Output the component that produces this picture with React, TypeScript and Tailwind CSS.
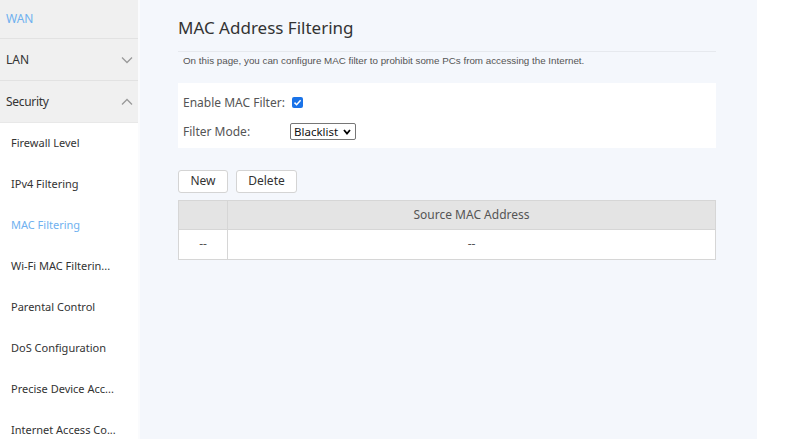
import React from "react";

const Chevron = ({ up }: { up?: boolean }) => (
  <svg width="12" height="8" viewBox="0 0 12 8" fill="none">
    <path
      d={up ? "M1 6.5 L6 1.5 L11 6.5" : "M1 1.5 L6 6.5 L11 1.5"}
      stroke="#9a9a9a"
      strokeWidth="1.3"
    />
  </svg>
);

const sub = [
  "Firewall Level",
  "IPv4 Filtering",
  "MAC Filtering",
  "Wi-Fi MAC Filterin...",
  "Parental Control",
  "DoS Configuration",
  "Precise Device Acc...",
  "Internet Access Co...",
];

export default function App() {
  return (
    <div
      className="flex w-[800px] h-[439px] overflow-hidden bg-white"
      style={{ fontFamily: "'Noto Sans', 'Open Sans', sans-serif" }}
    >
      <div className="w-[138px] shrink-0 flex flex-col bg-white">
        <div className="bg-[#f0f0f0]">
          <div className="h-[40px] -mt-[1px] flex items-center pl-[6px] text-[12px] text-[#6fb1ef] border-b border-[#e2e2e2]">
            WAN
          </div>
          <div className="h-[42px] flex items-center justify-between pl-[6px] pr-[5px] text-[12px] text-[#333] border-b border-[#e2e2e2]">
            <span>LAN</span>
            <Chevron />
          </div>
          <div className="h-[41px] flex items-center justify-between pl-[6px] pr-[5px] text-[12px] text-[#333]">
            <span className="tracking-[-0.3px]">Security</span>
            <Chevron up />
          </div>
        </div>
        <div className="flex flex-col border-t border-[#e8e8e8]">
          {sub.map((s) => (
            <div
              key={s}
              className={`h-[41px] flex items-center pl-[11px] text-[11px] ${
                s === "MAC Filtering" ? "text-[#6fb1ef]" : "text-[#333]"
              }`}
            >
              {s}
            </div>
          ))}
        </div>
      </div>
      <div className="w-[2px] bg-[#fafbfd]" />
      <div className="w-[617px] shrink-0 bg-[#f4f7fc] pl-[38px] pr-[41px]">
        <div className="h-[52px] flex items-end pb-[11px] text-[17px] text-[#333] border-b border-[#e6e9ee]">
          MAC Address Filtering
        </div>
        <div
          className="pt-[2px] pl-[5px] text-[9.8px] text-[#555]"
          style={{ fontFamily: "'Liberation Sans', Arial, sans-serif" }}
        >
          On this page, you can configure MAC filter to prohibit some PCs from accessing the Internet.
        </div>
        <div className="mt-[14px] h-[65px] bg-white pl-[5px] pt-[6px] text-[12px] text-[#555]">
          <div className="h-[28px] flex items-center">
            <span className="w-[109px]">Enable MAC Filter:</span>
            <span className="w-[11px] h-[11px] rounded-[2px] bg-[#1a73e8] flex items-center justify-center">
              <svg width="9" height="9" viewBox="0 0 9 9">
                <path d="M1.5 4.6 L3.6 6.7 L7.6 2.2" stroke="white" strokeWidth="1.5" fill="none" />
              </svg>
            </span>
          </div>
          <div className="h-[30px] flex items-center">
            <span className="w-[107px]">Filter Mode:</span>
            <span className="h-[17px] w-[66px] border border-[#767676] rounded-[2px] flex items-center justify-between pl-[3px] pr-[4px] text-[11.5px] text-[#111] bg-white">
              <span>Blacklist</span>
              <svg width="8" height="6" viewBox="0 0 8 6">
                <path d="M1 1 L4 4.5 L7 1" stroke="black" strokeWidth="1.8" fill="none" />
              </svg>
            </span>
          </div>
        </div>
        <div className="mt-[22px] flex gap-[8px]">
          <button className="h-[23px] w-[50px] bg-white border border-[#d4d4d4] rounded-[3px] text-[12px] text-[#333]">
            New
          </button>
          <button className="h-[23px] w-[61px] bg-white border border-[#d4d4d4] rounded-[3px] text-[12px] text-[#333]">
            Delete
          </button>
        </div>
        <div className="mt-[7px] border border-[#d6d6d6] text-[12px] text-[#555]">
          <div className="flex h-[29px] bg-[#e4e4e4] border-b border-[#d6d6d6]">
            <div className="w-[49px] border-r border-[#d6d6d6]" />
            <div className="flex-1 flex items-center justify-center">Source MAC Address</div>
          </div>
          <div className="flex h-[29px] bg-white">
            <div className="w-[49px] border-r border-[#d6d6d6] flex items-center justify-center">--</div>
            <div className="flex-1 flex items-center justify-center">--</div>
          </div>
        </div>
      </div>
      <div className="flex-1 bg-white" />
    </div>
  );
}
